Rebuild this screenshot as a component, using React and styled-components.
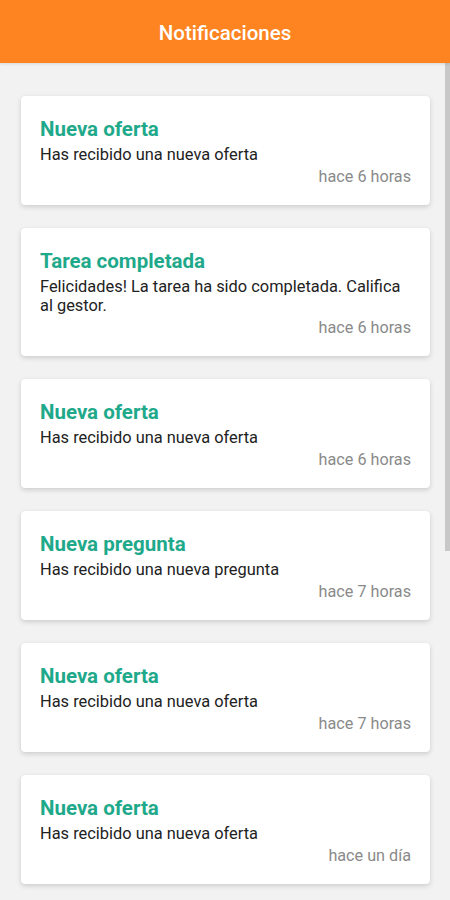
import React from "react";
import styled, { createGlobalStyle } from "styled-components";

const GlobalStyle = createGlobalStyle`
  html, body {
    margin: 0;
    padding: 0;
    background: #f2f2f2;
    font-family: Roboto, "Noto Sans", "Liberation Sans", sans-serif;
  }
`;

const Screen = styled.div`
  position: relative;
  height: 100vh;
  display: flex;
  flex-direction: column;
  overflow: hidden;
  background: #f2f2f2;
`;

const Header = styled.header`
  flex: 0 0 63px;
  display: flex;
  align-items: center;
  justify-content: center;
  padding-top: 2px;
  box-sizing: border-box;
  background: #fd8420;
  box-shadow: 0 1px 3px rgba(0, 0, 0, 0.12);
  z-index: 2;
`;

const HeaderTitle = styled.h1`
  margin: 0;
  color: #fff;
  font-size: 20.5px;
  font-weight: 500;
`;

const List = styled.main`
  flex: 1;
  display: flex;
  flex-direction: column;
  gap: 23px;
  padding: 33px 20px 0 21px;
`;

const Card = styled.article`
  flex: 0 0 auto;
  display: flex;
  flex-direction: column;
  background: #fff;
  border-radius: 4px;
  padding: 20px 19px 18px;
  box-shadow: 0 2px 5px rgba(0, 0, 0, 0.15), 0 0 1px rgba(0, 0, 0, 0.08);
`;

const Title = styled.h2`
  margin: 0;
  color: #1fa98b;
  font-size: 20.5px;
  font-weight: 700;
  line-height: 26px;
`;

const Body = styled.p`
  margin: 3px 0 0;
  color: #222;
  font-size: 16.4px;
  line-height: 19px;
`;

const Time = styled.span`
  align-self: flex-end;
  margin-top: 3px;
  color: #8a8a8a;
  font-size: 16.2px;
  line-height: 20px;
`;

const ScrollThumb = styled.div`
  position: absolute;
  top: 63px;
  right: 0;
  width: 5px;
  height: 488px;
  background: #c8c8c8;
`;

const notifications = [
  { title: "Nueva oferta", body: "Has recibido una nueva oferta", time: "hace 6 horas" },
  { title: "Tarea completada", body: "Felicidades! La tarea ha sido completada. Califica al gestor.", time: "hace 6 horas" },
  { title: "Nueva oferta", body: "Has recibido una nueva oferta", time: "hace 6 horas" },
  { title: "Nueva pregunta", body: "Has recibido una nueva pregunta", time: "hace 7 horas" },
  { title: "Nueva oferta", body: "Has recibido una nueva oferta", time: "hace 7 horas" },
  { title: "Nueva oferta", body: "Has recibido una nueva oferta", time: "hace un día" },
];

export default function App() {
  return (
    <Screen>
      <GlobalStyle />
      <Header>
        <HeaderTitle>Notificaciones</HeaderTitle>
      </Header>
      <List>
        {notifications.map((n, i) => (
          <Card key={i}>
            <Title>{n.title}</Title>
            <Body>{n.body}</Body>
            <Time>{n.time}</Time>
          </Card>
        ))}
      </List>
      <ScrollThumb />
    </Screen>
  );
}
